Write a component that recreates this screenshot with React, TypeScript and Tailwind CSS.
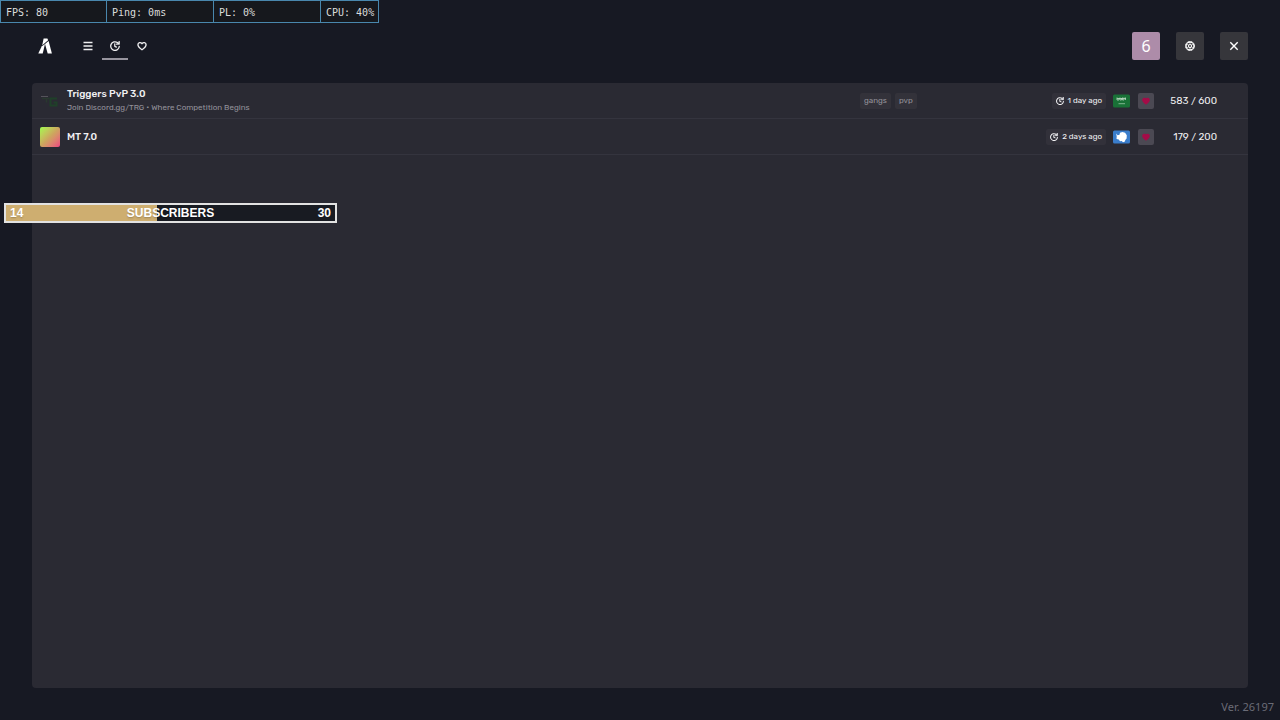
import type { ReactNode } from "react";
import clsx from "clsx";

type Server = {
  name: string;
  description?: string;
  tags: string[];
  lastPlayed: string;
  players: string;
  icon: ReactNode;
  flag: ReactNode;
};

function Logo() {
  return (
    <svg viewBox="0 0 14 16" className="h-4 w-3.5" fill="#fff">
      <path d="M5.6 0.5h3.8l0.7 1.8-5.9 4.9z" />
      <path d="M3.6 8.6 7 5.9 4.7 15.500H0.300z" />
      <path d="M7 5.900 10.600 3.100 13.900 15.500H9.700z" />
    </svg>
  );
}

function UpdateIcon({ className }: { className: string }) {
  return (
    <svg
      viewBox="1 1 14 14"
      className={className}
      fill="none"
      stroke="currentColor"
      strokeWidth="1.8"
      strokeLinecap="round"
      strokeLinejoin="round"
    >
      <path d="M11.4 3.2A6 6 0 1 0 14 8.4" />
      <path d="M14.2 1.6v4.1h-4.1z" fill="currentColor" strokeWidth="1" />
      <path d="M7.7 4.9v3.6l2.3 1" />
    </svg>
  );
}

function HeartIcon({ className, filled }: { className: string; filled?: boolean }) {
  return (
    <svg
      viewBox="0 0 16 16"
      className={className}
      fill={filled ? "currentColor" : "none"}
      stroke="currentColor"
      strokeWidth="2.2"
      strokeLinejoin="round"
    >
      <path d="M8 14C3.6 10.8 1.5 8.8 1.5 5.9 1.5 2.3 6 1.3 8 4.4c2-3.1 6.5-2.1 6.5 1.5C14.5 8.8 12.4 10.8 8 14z" />
    </svg>
  );
}

function MenuIcon() {
  return (
    <svg viewBox="0 0 10 10" className="size-2.5" stroke="currentColor" strokeWidth="1.4">
      <path d="M0.5 1.5h9M0.5 5h9M0.5 8.5h9" />
    </svg>
  );
}

function GearIcon() {
  return (
    <svg viewBox="0 0 16 16" className="size-2.5" fill="none" stroke="currentColor">
      <circle cx="8" cy="8" r="6.2" strokeWidth="1.8" />
      <circle cx="8" cy="8" r="7.3" strokeWidth="1.4" strokeDasharray="2.8 1" />
      <circle cx="8" cy="8" r="2.5" strokeWidth="1.8" />
      <path d="M8 2v3M8 11v3M2.8 5l2.6 1.5M10.6 9.5l2.6 1.5M2.8 11l2.6-1.5M10.6 6.5l2.6-1.5" />
    </svg>
  );
}

function CloseIcon() {
  return (
    <svg viewBox="0 0 10 10" className="size-2.5" stroke="currentColor" strokeWidth="1.4">
      <path d="M1.3 1.3l7.4 7.4M8.7 1.3 1.3 8.7" />
    </svg>
  );
}

function TriggersIcon() {
  return (
    <svg viewBox="0 0 20 20" className="size-5" fill="none">
      <path d="M1 5.5h7" stroke="#55535b" strokeWidth="1.2" />
      <path d="M2 7.5h7M6.5 7.5v4" stroke="#29382f" strokeWidth="1.5" />
      <path d="M17 7.5h-6.5v7h6V11.5h-3" stroke="#1f4029" strokeWidth="2" />
    </svg>
  );
}

function SaudiFlag() {
  return (
    <svg viewBox="0 0 17 13" className="h-3.5 w-[17px]">
      <rect width="17" height="13" rx="1.5" fill="#197137" />
      <path
        d="M4 3v2.5h2V3.5M7 3v2.5h1.5V3.5M9.5 3v2.5h1.5V3M12.5 3v2.5M4 4h9"
        fill="none"
        stroke="#b9d5c0"
        strokeWidth="0.8"
      />
      <path d="M5.5 9.2h6.5" stroke="#9cc5a7" strokeWidth="0.8" />
    </svg>
  );
}

function AntarcticaFlag() {
  return (
    <svg viewBox="0 0 17 13" className="h-3.5 w-[17px]">
      <rect width="17" height="13" rx="1.5" fill="#3a7dcb" />
      <path
        d="M3.2 3 4.6 4.800l1.900-.6L7 2.300 9.400 1.400l2.700.8 1.700 2.500-.2 3.400-1.300 1.300-.4 1.700-1.900.6-1.300-1.300-1.700.3-1.300-1.600-2.200-.6L3.700 6z"
        fill="#fff"
      />
    </svg>
  );
}

const stats = [
  { text: "FPS: 80", width: "w-[107px] border-l" },
  { text: "Ping: 0ms", width: "w-[107px]" },
  { text: "PL: 0%", width: "w-[107px]" },
  { text: "CPU: 40%", width: "w-[58px]" },
];

const tabs = [
  { label: "All servers", icon: <MenuIcon /> },
  { label: "History", icon: <UpdateIcon className="size-2.5" />, active: true },
  { label: "Favorites", icon: <HeartIcon className="size-2.5" /> },
];

const servers: Server[] = [
  {
    name: "Triggers PvP 3.0",
    description: "Join Discord.gg/TRG • Where Competition Begins",
    tags: ["gangs", "pvp"],
    lastPlayed: "1 day ago",
    players: "583 / 600",
    icon: <TriggersIcon />,
    flag: <SaudiFlag />,
  },
  {
    name: "MT 7.0",
    tags: [],
    lastPlayed: "2 days ago",
    players: "179 / 200",
    icon: <div className="size-5 rounded-xs bg-linear-to-br from-[#9cfa4e] via-[#cda55e] to-[#ec3f7e]" />,
    flag: <AntarcticaFlag />,
  },
];

function StatusBar() {
  return (
    <div className="flex h-[23px] w-fit border-y border-[#4987ad] bg-[#16181d] font-['DejaVu_Sans_Mono',monospace] text-[10px] text-[#dcdcdc]">
      {stats.map((stat) => (
        <div
          key={stat.text}
          className={clsx("flex items-center whitespace-nowrap border-r border-[#4987ad] pt-px pl-[5px]", stat.width)}
        >
          {stat.text}
        </div>
      ))}
    </div>
  );
}

function Header() {
  return (
    <header className="flex items-center justify-between px-8 pt-[9px] pb-2">
      <div className="flex items-center">
        <a href="#home" aria-label="Home" className="flex w-[43px] pl-1.5">
          <Logo />
        </a>
        <nav className="flex gap-px">
          {tabs.map((tab) => (
            <button
              key={tab.label}
              aria-label={tab.label}
              className={clsx(
                "flex h-7 w-[26px] items-center justify-center border-b-2 pt-0.5 text-[#eeeef0]",
                tab.active ? "border-[#97949e]" : "border-transparent"
              )}
            >
              {tab.icon}
            </button>
          ))}
        </nav>
      </div>

      <div className="flex gap-4">
        <button aria-label="Account" className="size-7 rounded-xs bg-[#ad8ca9] font-['Noto_Sans',sans-serif] text-base text-white">
          6
        </button>
        <button aria-label="Settings" className="flex size-7 items-center justify-center rounded-xs bg-[#36363b] text-white">
          <GearIcon />
        </button>
        <button aria-label="Close" className="flex size-7 items-center justify-center rounded-xs bg-[#36363b] text-white">
          <CloseIcon />
        </button>
      </div>
    </header>
  );
}

function ServerRow({ server }: { server: Server }) {
  return (
    <li className="flex h-9 items-center border-b border-[#34343e] pr-[31px] pl-2">
      {server.icon}
      <div className="ml-[7px] flex-1">
        <h2 className="text-[10px] leading-[14px] font-medium text-[#f0f0f2]">{server.name}</h2>
        {server.description && (
          <p className="text-[8px] leading-[14px] text-[#94929b]">{server.description}</p>
        )}
      </div>

      <div className="flex w-[246px] items-center justify-between">
        <div className="flex gap-1">
          {server.tags.map((tag) => (
            <span key={tag} className="rounded-xs bg-[#33323a] px-1 text-[8px] leading-4 text-[#94929b]">
              {tag}
            </span>
          ))}
        </div>
        <span className="flex items-center gap-1 rounded-xs bg-[#32313a] px-1 text-[8px] leading-4 text-[#f0f0f2]">
          <UpdateIcon className="size-2" />
          {server.lastPlayed}
        </span>
      </div>

      <div className="ml-[7px] flex items-center gap-2">
        {server.flag}
        <button
          aria-label={`Favorite ${server.name}`}
          className="flex size-4 items-center justify-center rounded-xs bg-[#4b4953] text-[#a50c48]"
        >
          <HeartIcon className="size-2" filled />
        </button>
      </div>
      <span className="w-[63px] text-right text-[10px] leading-4 text-[#f0f0f2]">{server.players}</span>
    </li>
  );
}

function SubscriberGoal({ current, goal, percent }: { current: number; goal: number; percent: number }) {
  return (
    <div className="absolute top-[203px] left-1 flex h-5 w-[333px] items-center justify-between border-2 border-[#e2e2e2] bg-[#181b22] px-1 font-['Liberation_Sans',sans-serif] text-xs font-bold text-white">
      <div className="absolute inset-y-0 left-0 bg-[#ceae70]" style={{ width: `${percent}%` }} />
      <span className="relative text-shadow-sm">{current}</span>
      <span className="relative text-shadow-sm">SUBSCRIBERS</span>
      <span className="relative">{goal}</span>
    </div>
  );
}

export default function App() {
  return (
    <div className="relative flex min-h-screen flex-col bg-[#171923] font-['Rubik','Roboto',sans-serif]">
      <StatusBar />
      <Header />
      <main className="mx-8 mt-[15px] flex-1 overflow-hidden rounded-sm bg-[#2a2a33]">
        <ul>
          {servers.map((server) => (
            <ServerRow key={server.name} server={server} />
          ))}
        </ul>
      </main>
      <footer className="flex h-8 items-center justify-end px-1.5 pt-1.5 font-['Noto_Sans',sans-serif] text-[11px] text-[#6b6c77]">
        Ver. 26197
      </footer>
      <SubscriberGoal current={14} goal={30} percent={46} />
    </div>
  );
}
